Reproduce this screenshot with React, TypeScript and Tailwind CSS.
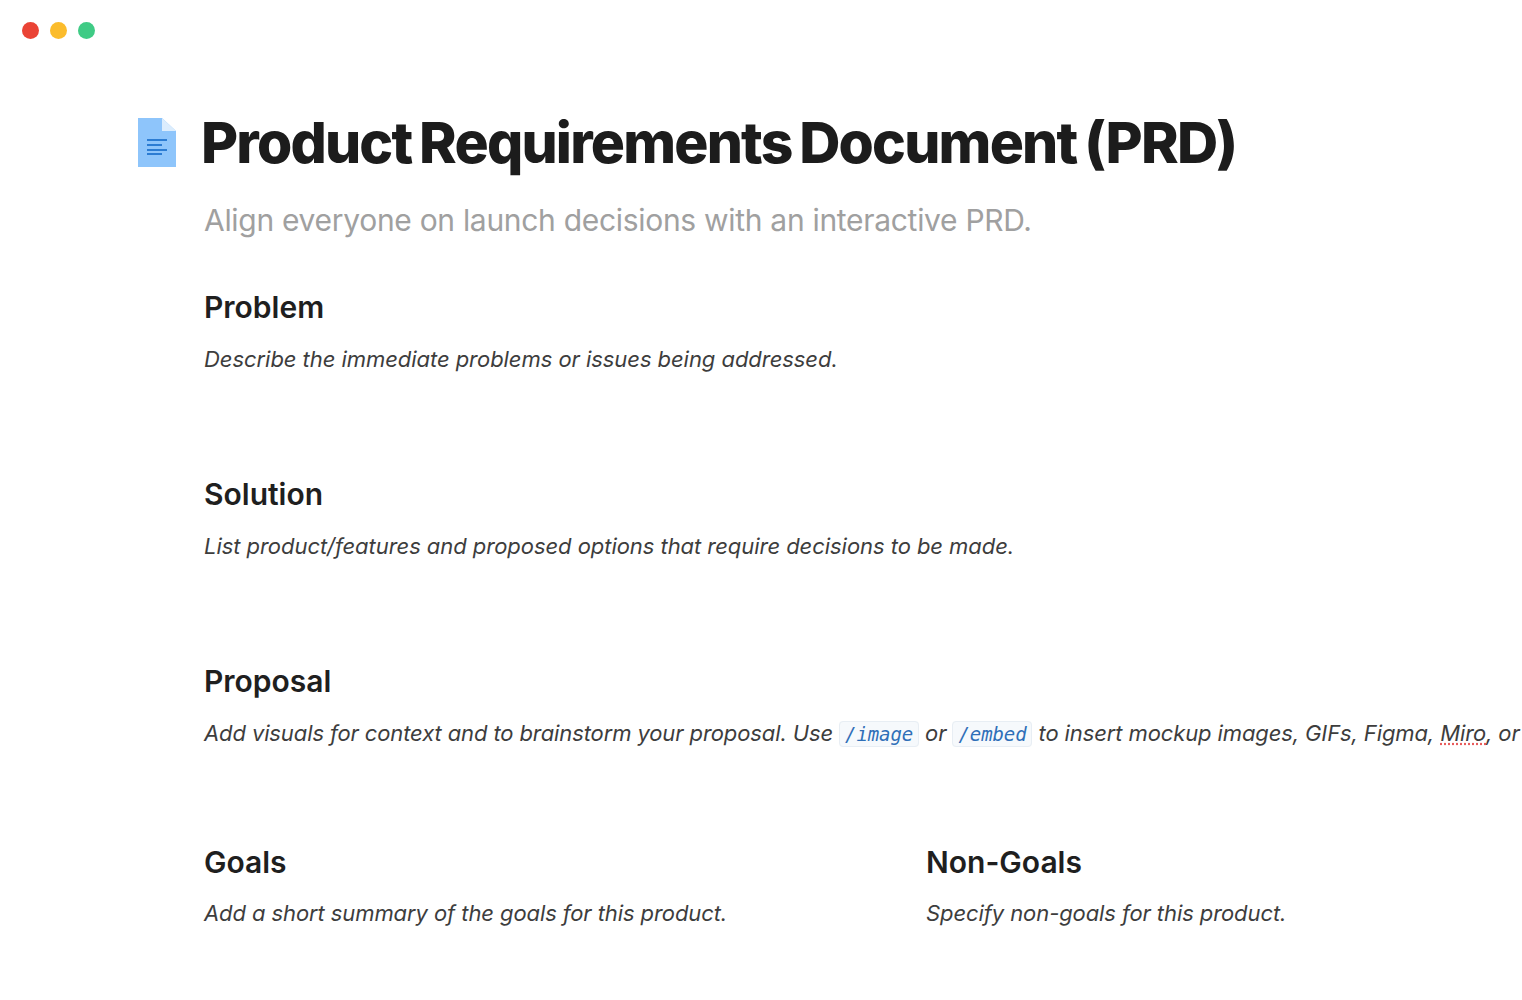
import React from "react";

function Code({ children }: { children: React.ReactNode }) {
  return (
    <code className="rounded-[4px] border border-[#e8eef4] bg-[#f6f9fc] px-[5px] py-[1px] font-['DejaVu_Sans_Mono',monospace] text-[19px] text-[#2f6fb8]">
      {children}
    </code>
  );
}

function Section({ title, children, className = "", bodyClassName = "tracking-[-0.05px]" }: { title: string; children: React.ReactNode; className?: string; bodyClassName?: string }) {
  return (
    <section className={className}>
      <h2 className="text-[30px] leading-[36px] font-semibold text-[#1f1f1f]">{title}</h2>
      <p className={`mt-[17px] whitespace-nowrap text-[22px] leading-[34px] italic text-[#3d3d3d] ${bodyClassName}`}>{children}</p>
    </section>
  );
}

function DocIcon() {
  return (
    <svg width="40" height="50" viewBox="0 0 40 50" className="shrink-0 -translate-y-px">
      <path d="M1 0H25L39 13V49H1Z" fill="#8ec5fb" />
      <path d="M25 0L39 13H25Z" fill="#dcedfd" />
      <path d="M10 22H30M10 27H25M10 32H30M10 36H25" stroke="#2b7cd3" strokeWidth="2" />
    </svg>
  );
}

export default function App() {
  return (
    <div className="h-[1000px] w-[1522px] overflow-hidden bg-white font-['Inter',sans-serif]">
      <div className="flex gap-[11px] pt-[22px] pl-[22px]">
        <span className="size-[17px] rounded-full bg-[#ea4335]" />
        <span className="size-[17px] rounded-full bg-[#fbbc2c]" />
        <span className="size-[17px] rounded-full bg-[#3fcb85]" />
      </div>
      <div className="mt-[70px] flex items-center gap-[24px] pl-[137px]">
        <DocIcon />
        <h1 className="-translate-y-px whitespace-nowrap text-[57px] leading-[70px] font-extrabold tracking-[-1.8px] [word-spacing:-3px] text-[#1c1c1c]">
          Product Requirements Document (PRD)
        </h1>
      </div>
      <div className="pl-[204px]">
        <p className="mt-[23px] text-[30px] leading-[36px] tracking-[-0.3px] text-[#a0a0a0]">
          Align everyone on launch decisions with an interactive PRD.
        </p>
        <Section title="Problem" className="mt-[51px]">
          Describe the immediate problems or issues being addressed.
        </Section>
        <Section title="Solution" className="mt-[100px]">
          List product/features and proposed options that require decisions to be made.
        </Section>
        <Section title="Proposal" className="mt-[100px]" bodyClassName="tracking-[-0.11px]">
          Add visuals for context and to brainstorm your proposal. Use <Code>/image</Code> or <Code>/embed</Code> to insert mockup images, GIFs, Figma,{" "}
          <span className="underline decoration-[#e85c5c] decoration-dotted">Miro</span>, or
        </Section>
        <div className="mt-[93px] flex">
          <Section title="Goals" className="w-[722px]" bodyClassName="-translate-y-px tracking-[-0.09px]">
            Add a short summary of the goals for this product.
          </Section>
          <Section title="Non-Goals" bodyClassName="-translate-y-px tracking-[-0.09px]">Specify non-goals for this product.</Section>
        </div>
      </div>
    </div>
  );
}
